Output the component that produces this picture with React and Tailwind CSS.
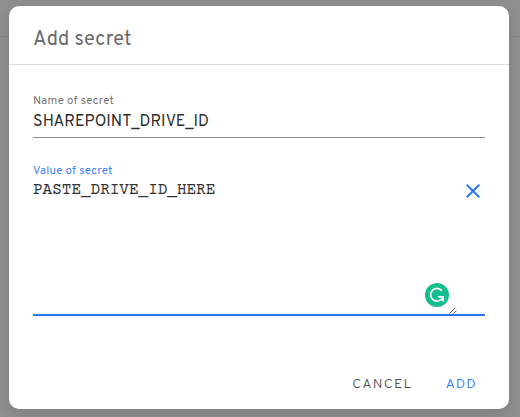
function ClearIcon() {
  return (
    <svg className="block h-3.5 w-3.5" viewBox="0 0 14 14" fill="none" stroke="#2979ff" strokeWidth="2">
      <path d="M.7.7l12.6 12.6M13.3.7L.7 13.3" />
    </svg>
  );
}

function AssistantBadge() {
  return (
    <svg className="absolute top-[120px] left-[392px] h-6 w-6" viewBox="0 0 24 24" fill="none">
      <circle cx="12" cy="12" r="12" fill="#15bd8f" />
      <path d="M16.9 7.6A6.4 6.4 0 1 0 18 14M13.2 13.9H18.2V18.6" stroke="#fff" strokeWidth="1.7" />
    </svg>
  );
}

function ResizeGrip() {
  return (
    <svg className="absolute top-[144px] left-[416px] h-[7px] w-2" viewBox="0 0 8 7" fill="none" stroke="#555" strokeWidth=".9">
      <path d="M.5 6.5l6-6M4.5 6.5l3-3" />
    </svg>
  );
}

export default function App() {
  return (
    <div className="flex h-[417px] w-[520px] flex-col bg-[#8f8f8f] bg-[linear-gradient(#868686,#868686)] bg-[length:100%_1px] bg-[position:0_36px] bg-no-repeat pt-1.5 pl-[9px] font-['Overpass','Roboto',sans-serif]">
      <div className="flex h-[403px] w-[500px] flex-col rounded-[10px] bg-white shadow-[0_4px_14px_rgba(0,0,0,0.12)]">
        <header className="h-[59px] border-b border-[#dedede] pt-5 pl-6">
          <h1 className="text-xl leading-7 font-normal tracking-[0.25px] whitespace-nowrap text-[#6a6a6a]">Add secret</h1>
        </header>
        <main className="flex flex-col px-6 pt-7">
          <label className="h-[45px] border-b border-[#909090]">
            <span className="block text-[11.5px] leading-4 tracking-[0.25px] text-[#777]">Name of secret</span>
            <span className="block pt-px text-base leading-6 tracking-[0.07px] text-[#2c2c2c]">SHAREPOINT_DRIVE_ID</span>
          </label>
          <div className="relative mt-[25px] h-[153px] border-b-2 border-[#2979ff]">
            <span className="block text-[11.5px] leading-4 tracking-[0.25px] text-[#3d84ff]">Value of secret</span>
            <div className="flex justify-between pr-[5px]">
              <span className="font-['Courier_Prime','Courier_10_Pitch','Liberation_Mono',monospace] text-base leading-[22px] text-[#333]">PASTE_DRIVE_ID_HERE</span>
              <span className="pt-[5px]"><ClearIcon /></span>
            </div>
            <AssistantBadge />
            <ResizeGrip />
          </div>
        </main>
        <footer className="mt-auto flex justify-end gap-[33px] pr-8 pb-3.5 text-sm leading-5 font-light">
          <button className="tracking-[1.3px] text-[#505050]">CANCEL</button>
          <button className="tracking-[1.2px] text-[#2979ff]">ADD</button>
        </footer>
      </div>
    </div>
  );
}
